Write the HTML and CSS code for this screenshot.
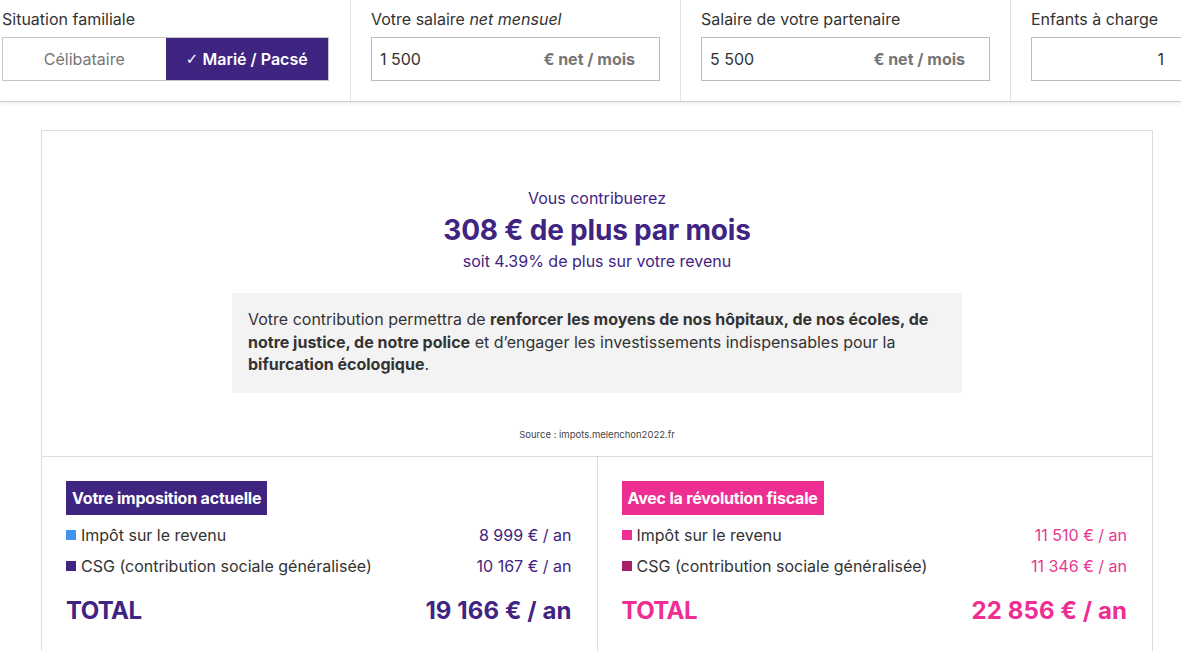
FILE: index.html
```html
<!DOCTYPE html>
<html lang="fr">
<head>
<meta charset="utf-8">
<title>Simulateur</title>
<link rel="stylesheet" href="styles.css">
</head>
<body>
<header class="bar">
  <div class="field field-first">
    <div class="label">Situation familiale</div>
    <div class="toggle">
      <div class="opt">Célibataire</div>
      <div class="opt opt-on"><span class="check">✓</span>&nbsp;Marié / Pacsé</div>
    </div>
  </div>
  <div class="field">
    <div class="label">Votre salaire <em>net mensuel</em></div>
    <div class="input"><span class="val">1 500</span><span class="suffix">€ net / mois</span></div>
  </div>
  <div class="field">
    <div class="label">Salaire de votre partenaire</div>
    <div class="input"><span class="val">5 500</span><span class="suffix">€ net / mois</span></div>
  </div>
  <div class="field field-last">
    <div class="label">Enfants à charge</div>
    <div class="input input-num"><span class="val">1</span></div>
  </div>
</header>

<main class="card">
  <section class="summary">
    <div class="intro">Vous contribuerez</div>
    <div class="amount">308 € de plus par mois</div>
    <div class="ratio">soit 4.39% de plus sur votre revenu</div>
    <div class="note">Votre contribution permettra de <strong>renforcer les moyens de nos hôpitaux, de nos écoles, de notre justice, de notre police</strong> et d’engager les investissements indispensables pour la <strong>bifurcation écologique</strong>.</div>
    <div class="source">Source : impots.melenchon2022.fr</div>
  </section>
  <section class="compare">
    <div class="col col-now">
      <div class="badge">Votre imposition actuelle</div>
      <div class="row"><span class="name"><i class="sq sq-blue"></i>Impôt sur le revenu</span><span class="num">8 999 € / an</span></div>
      <div class="row"><span class="name"><i class="sq sq-purple"></i>CSG (contribution sociale généralisée)</span><span class="num">10 167 € / an</span></div>
      <div class="total"><span class="total-label">TOTAL</span><span class="total-num">19 166 € / an</span></div>
    </div>
    <div class="col col-new">
      <div class="badge">Avec la révolution fiscale</div>
      <div class="row"><span class="name"><i class="sq sq-pink"></i>Impôt sur le revenu</span><span class="num">11 510 € / an</span></div>
      <div class="row"><span class="name"><i class="sq sq-magenta"></i>CSG (contribution sociale généralisée)</span><span class="num">11 346 € / an</span></div>
      <div class="total"><span class="total-label">TOTAL</span><span class="total-num">22 856 € / an</span></div>
    </div>
  </section>
</main>
</body>
</html>
```

FILE: styles.css
```css
* { box-sizing: border-box; }
html, body { margin: 0; padding: 0; background: #fff; }
body {
  font-family: Inter, "Noto Sans", "Liberation Sans", sans-serif;
  color: #333;
  font-size: 16px;
  overflow: hidden;
  width: 1181px;
}

.bar {
  display: flex;
  height: 102px;
  border-bottom: 1px solid #c9cfcd;
  box-shadow: 0 2px 4px rgba(0, 0, 0, 0.07);
}
.field {
  flex: 0 0 330px;
  padding: 9px 20px 0 20px;
  border-right: 1px solid #e2e2e2;
}
.field-first { flex-basis: 351px; padding-left: 2px; padding-right: 21px; }
.field-last { flex: 0 0 170px; border-right: none; padding-right: 0; overflow: hidden; }
.label {
  font-size: 16px;
  line-height: 20px;
  color: #333;
  margin-bottom: 8px;
  white-space: nowrap;
}
.label em { font-style: italic; }

.toggle {
  display: flex;
  height: 44px;
  border: 1px solid #c4c4c4;
}
.opt {
  flex: 1;
  display: flex;
  align-items: center;
  justify-content: center;
  color: #777;
  font-size: 16px;
}
.opt-on {
  background: #3f2482;
  color: #fff;
  font-weight: 600;
}
.check { font-family: "DejaVu Sans", sans-serif; font-weight: 400; font-size: 15px; }

.input {
  display: flex;
  align-items: center;
  justify-content: space-between;
  height: 44px;
  border: 1px solid #bdbdbd;
  padding: 0 24px 0 8px;
  font-size: 16px;
}
.input .val { color: #333; }
.input .suffix { color: #767676; font-weight: 700; }
.input-num { width: 170px; justify-content: flex-end; padding-right: 36px; }

.card {
  margin: 28px 0 0 41px;
  width: 1112px;
  border: 1px solid #dcdcdc;
  border-bottom: none;
}
.summary {
  display: flex;
  flex-direction: column;
  align-items: center;
  padding: 57px 0 15px;
  border-bottom: 1px solid #dcdcdc;
}
.intro { font-size: 16px; line-height: 20px; color: #3f2482; }
.amount {
  font-size: 28px;
  line-height: 36px;
  font-weight: 700;
  color: #3f2482;
  margin-top: 4px;
  letter-spacing: -0.2px;
}
.ratio { font-size: 16px; line-height: 20px; color: #3f2482; margin-top: 3px; }
.note {
  margin-top: 22px;
  width: 730px;
  background: #f3f3f3;
  padding: 15px 16px 17px;
  font-size: 16px;
  line-height: 22.5px;
  color: #333;
}
.note strong { font-weight: 700; }
.source {
  margin-top: 36px;
  font-size: 9.5px;
  line-height: 12px;
  color: #444;
}

.compare { display: flex; }
.col {
  flex: 1;
  padding: 24px 25px 28px 24px;
}
.col-now { border-right: 1px solid #dcdcdc; }
.badge {
  display: inline-block;
  height: 34px;
  line-height: 34px;
  padding: 0 6px;
  font-weight: 700;
  font-size: 16px;
  letter-spacing: -0.2px;
  color: #fff;
  margin-bottom: 5px;
}
.col-now .badge { background: #3f2482; }
.col-new .badge { background: #ee2e92; }
.row {
  display: flex;
  justify-content: space-between;
  align-items: center;
  height: 31px;
  font-size: 16px;
}
.name { display: flex; align-items: center; color: #333; }
.sq { display: inline-block; width: 10px; height: 10px; margin-right: 5px; }
.sq-blue { background: #4293f1; }
.sq-purple { background: #3f2482; }
.sq-pink { background: #ee2e92; }
.sq-magenta { background: #a81f6a; }
.col-now .num { color: #3f2482; }
.col-new .num { color: #e8398f; }
.total {
  display: flex;
  justify-content: space-between;
  align-items: center;
  margin-top: 14px;
  height: 30px;
  font-size: 24px;
  font-weight: 700;
}
.total-label { letter-spacing: -0.6px; }
.total-num { letter-spacing: 0.1px; }
.col-now .total { color: #3f2482; }
.col-new .total { color: #ee2e92; }
```
